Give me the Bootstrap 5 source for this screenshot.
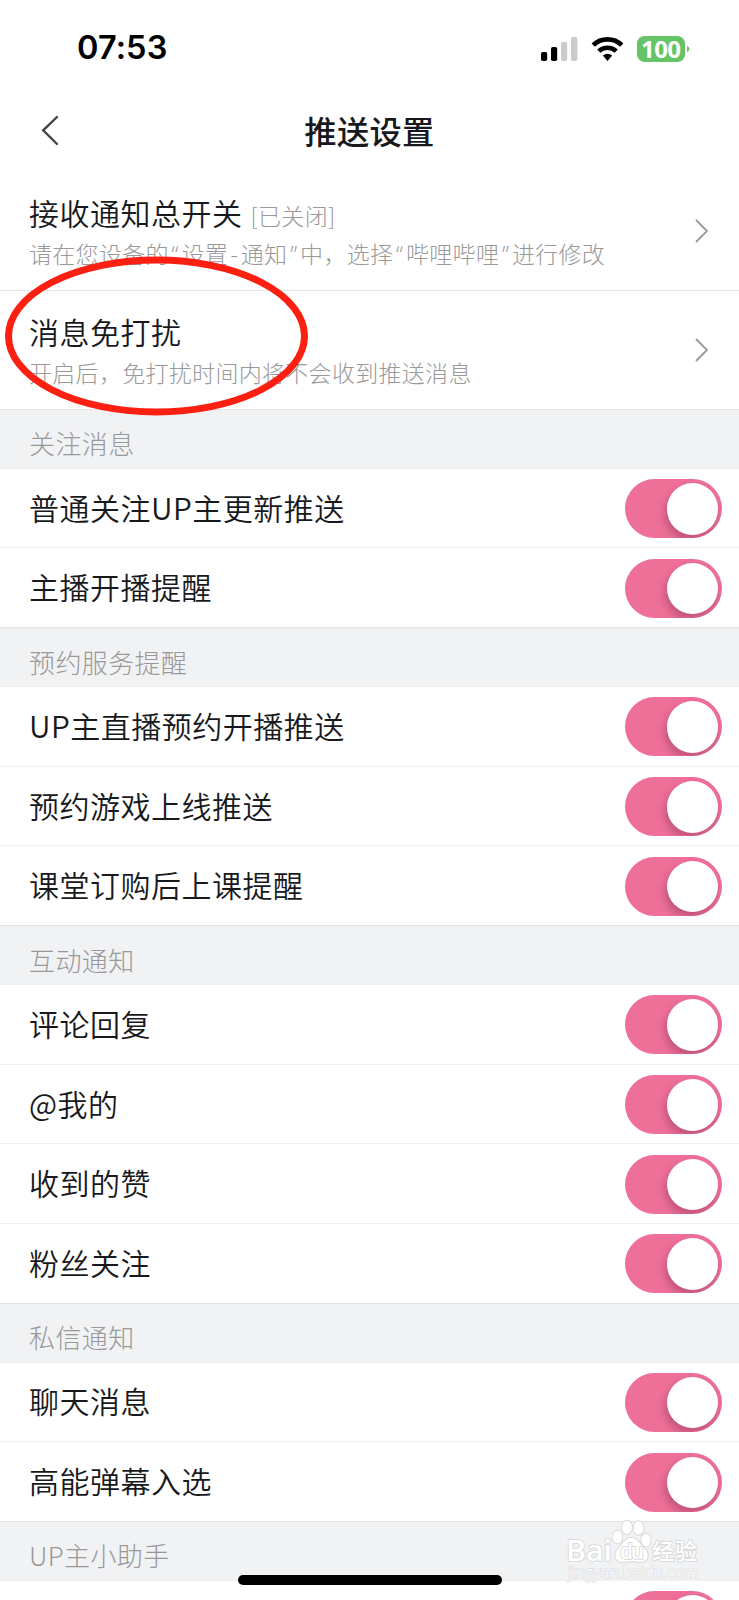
<!DOCTYPE html>
<html lang="zh-CN">
<head>
<meta charset="utf-8">
<meta name="viewport" content="width=device-width, initial-scale=1">
<title>推送设置</title>
<link href="https://cdn.jsdelivr.net/npm/bootstrap@5.3.0/dist/css/bootstrap.min.css" rel="stylesheet">
<style>
html,body{height:1600px;overflow:hidden}
body{font-family:"Noto Sans CJK SC",sans-serif;color:#18191c;font-weight:300;background:#fff}
.screen{height:1600px}
.status-bar{height:96px;padding:1px 49px 0 77px}
.clock{font:600 32.5px/1 Inter,sans-serif;color:#000;letter-spacing:.1px}
.nav-head{height:76px;padding-bottom:7px}
.nav-title{font-size:32.3px;font-weight:500;letter-spacing:.3px;line-height:1}
.back-icon{left:40px;top:18px}
.link-row{height:118.3px;padding:0 30px 0 29px}
.link-row + .link-row{border-top:1px solid #e3e5e7}
.row-title{font-size:30px;letter-spacing:.5px;line-height:36px;font-weight:350}
.state{font-size:23px;letter-spacing:.3px;line-height:30px;color:#9499a0;color:#999}
.desc{font-size:23px;letter-spacing:.3px;line-height:30px;color:#999;margin-top:8px}
.qt{display:inline-block;width:12.7px;text-align:center;font-family:"Open Sans",sans-serif}
.group-head{height:59.2px;padding:8px 29px 0;background:#f1f2f4;border-top:1px solid #e1e3e5;color:#999;font-size:26px;letter-spacing:.4px}
.switch-row{height:79.6px;padding:1px 17px 0 29px;border-top:1px solid #f0f0f1}
.switch-row .row-title{margin-top:-4px}
.toggle{width:97px;height:59px;border-radius:30px;background:#ee7098;padding:4px 4px 0 0;overflow:hidden}
.knob{width:51.5px;height:51.5px;border-radius:50%;background:#fff;box-shadow:-2px 5px 9px rgba(90,20,50,.32)}
.mark-ring{left:0;top:250px}
.home-bar{left:238px;top:1575px;width:264px;height:10px;border-radius:5px;background:#000}
.water{left:560px;top:1515px}
</style>
</head>
<body>
<main class="screen position-relative overflow-hidden">
  <header class="status-bar d-flex align-items-center justify-content-between">
    <span class="clock">07:53</span>
    <svg width="150" height="28" viewBox="540 35 150 28">
      <rect x="541" y="52" width="6.2" height="9" rx="1.8"/><rect x="551" y="47" width="6.2" height="14" rx="1.8"/>
      <rect x="561" y="42" width="6.2" height="19" rx="1.8" fill="#cbcbcb"/><rect x="571" y="37" width="6.4" height="24" rx="1.8" fill="#cbcbcb"/>
      <g fill="none" stroke="#000" stroke-width="4.6"><path d="M593.2 45.2A20.5 20.5 0 0 1 621.8 45.2"/><path d="M598.8 51.2A12.6 12.6 0 0 1 616.2 51.2"/></g>
      <path d="M602.8 55.6Q607.5 52 612.2 55.6L607.5 61Z"/>
      <rect x="637" y="36" width="48" height="26" rx="7.5" fill="#65c466"/><path d="M687 46q2.4.8 2.4 3t-2.4 3z" fill="#65c466"/>
      <text x="661" y="58" text-anchor="middle" fill="#fff" font-family="Open Sans" font-weight="700" font-size="24" textLength="40">100</text>
    </svg>
  </header>
  <nav class="nav-head d-flex align-items-center justify-content-center position-relative">
    <svg class="back-icon position-absolute" width="20" height="34" viewBox="0 0 20 34"><path d="M17 3 3.2 16.3 17 30" fill="none" stroke="#444" stroke-width="2.4" stroke-linecap="round"/></svg>
    <span class="nav-title">推送设置</span>
  </nav>
  <section>
    <div class="link-row d-flex align-items-center justify-content-between">
      <div><div class="d-flex align-items-baseline gap-2"><span class="row-title">接收通知总开关</span><span class="state">[已关闭]</span></div>
      <div class="desc">请在您设备的<span class="qt">“</span>设置<span class="qt">-</span>通知<span class="qt">”</span>中，选择<span class="qt">“</span>哔哩哔哩<span class="qt">”</span>进行修改</div></div>
      <svg width="15" height="26" viewBox="0 0 15 26"><path d="m2 2 11 11L2 24" fill="none" stroke="#999" stroke-width="1.8"/></svg>
    </div>
    <div class="link-row d-flex align-items-center justify-content-between">
      <div><div class="row-title">消息免打扰</div><div class="desc">开启后，免打扰时间内将不会收到推送消息</div></div>
      <svg width="15" height="26" viewBox="0 0 15 26"><path d="m2 2 11 11L2 24" fill="none" stroke="#999" stroke-width="1.8"/></svg>
    </div>
  </section>
  <section>
    <div class="group-head d-flex align-items-center">关注消息</div>
    <div class="switch-row d-flex align-items-center justify-content-between"><span class="row-title">普通关注UP主更新推送</span><span class="toggle d-flex justify-content-end"><i class="knob"></i></span></div>
    <div class="switch-row d-flex align-items-center justify-content-between"><span class="row-title">主播开播提醒</span><span class="toggle d-flex justify-content-end"><i class="knob"></i></span></div>
  </section>
  <section>
    <div class="group-head d-flex align-items-center">预约服务提醒</div>
    <div class="switch-row d-flex align-items-center justify-content-between"><span class="row-title">UP主直播预约开播推送</span><span class="toggle d-flex justify-content-end"><i class="knob"></i></span></div>
    <div class="switch-row d-flex align-items-center justify-content-between"><span class="row-title">预约游戏上线推送</span><span class="toggle d-flex justify-content-end"><i class="knob"></i></span></div>
    <div class="switch-row d-flex align-items-center justify-content-between"><span class="row-title">课堂订购后上课提醒</span><span class="toggle d-flex justify-content-end"><i class="knob"></i></span></div>
  </section>
  <section>
    <div class="group-head d-flex align-items-center">互动通知</div>
    <div class="switch-row d-flex align-items-center justify-content-between"><span class="row-title">评论回复</span><span class="toggle d-flex justify-content-end"><i class="knob"></i></span></div>
    <div class="switch-row d-flex align-items-center justify-content-between"><span class="row-title">@我的</span><span class="toggle d-flex justify-content-end"><i class="knob"></i></span></div>
    <div class="switch-row d-flex align-items-center justify-content-between"><span class="row-title">收到的赞</span><span class="toggle d-flex justify-content-end"><i class="knob"></i></span></div>
    <div class="switch-row d-flex align-items-center justify-content-between"><span class="row-title">粉丝关注</span><span class="toggle d-flex justify-content-end"><i class="knob"></i></span></div>
  </section>
  <section>
    <div class="group-head d-flex align-items-center">私信通知</div>
    <div class="switch-row d-flex align-items-center justify-content-between"><span class="row-title">聊天消息</span><span class="toggle d-flex justify-content-end"><i class="knob"></i></span></div>
    <div class="switch-row d-flex align-items-center justify-content-between"><span class="row-title">高能弹幕入选</span><span class="toggle d-flex justify-content-end"><i class="knob"></i></span></div>
  </section>
  <section>
    <div class="group-head d-flex align-items-center">UP主小助手</div>
    <div class="switch-row d-flex align-items-center justify-content-end"><span class="toggle d-flex justify-content-end"><i class="knob"></i></span></div>
  </section>

  <svg class="mark-ring position-absolute" width="320" height="172" viewBox="0 250 320 172"><ellipse cx="156.5" cy="336" rx="148" ry="76" fill="none" stroke="#fc2012" stroke-width="7"/></svg>
  <!-- Baidu Jingyan watermark -->
  <svg class="water position-absolute" width="150" height="72" viewBox="560 1515 150 72">
    <g fill="#fff" stroke="#d9dadc" stroke-width="2" paint-order="stroke" stroke-linejoin="round">
      <text x="566" y="1561" font-family="Open Sans" font-weight="600" font-size="29" textLength="46" lengthAdjust="spacingAndGlyphs">Bai</text>
      <text x="652" y="1559" font-family="Noto Sans CJK SC" font-weight="500" font-size="22" textLength="45">经验</text>
      <ellipse cx="617.5" cy="1537" rx="4.8" ry="6.3"/><ellipse cx="627" cy="1527.5" rx="5" ry="6.8"/><ellipse cx="638.5" cy="1528" rx="5" ry="6.8"/><ellipse cx="646" cy="1540" rx="4.6" ry="6.3"/>
      <path d="M631 1538c-7 0-8 7-13 11-5 5-3 13 5 13 4 0 6-1 9-1s5 1 9 1c7 0 9-8 4-13-6-5-7-11-14-11z"/>
    </g>
    <text x="620" y="1559" fill="#fff" stroke="#d9dadc" stroke-width="1.8" paint-order="stroke" font-family="Open Sans" font-weight="600" font-size="21" textLength="24">du</text>
    <text x="568" y="1578" fill="#fff" stroke="#dedfe1" stroke-width="1.4" paint-order="stroke" font-family="Open Sans" font-size="16" textLength="130">jingyan.baidu.com</text>
  </svg>
  <div class="home-bar position-absolute"></div>
</main>
<script src="https://cdn.jsdelivr.net/npm/bootstrap@5.3.0/dist/js/bootstrap.bundle.min.js"></script>
</body>
</html>
